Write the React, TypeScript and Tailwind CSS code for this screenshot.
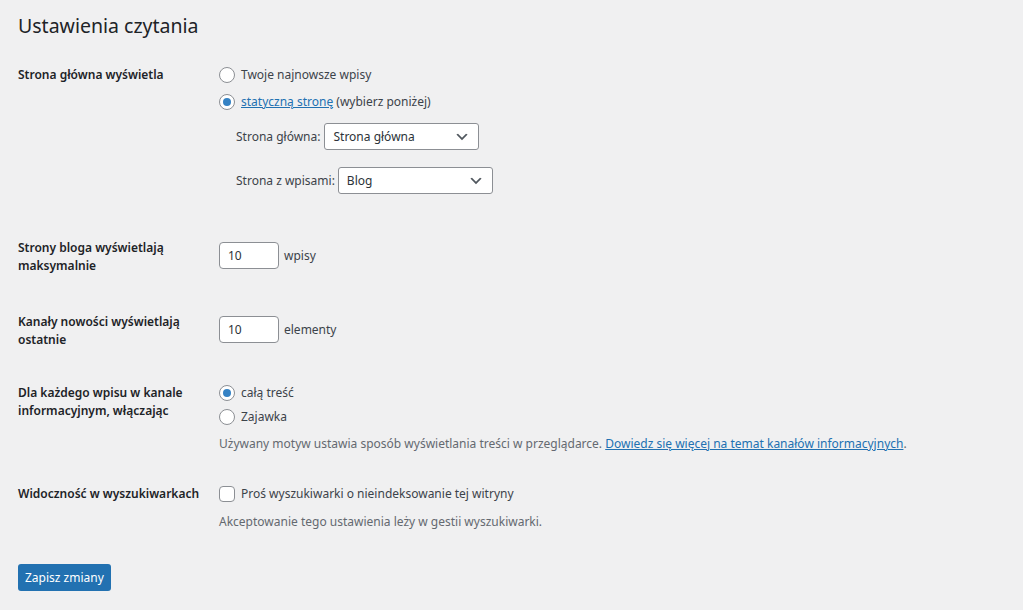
import React from 'react';

const font = { fontFamily: '"Noto Sans", "Open Sans", Arial, sans-serif' };

function Radio({ checked }: { checked?: boolean }) {
  return (
    <span className="flex h-4 w-4 shrink-0 items-center justify-center rounded-full border border-[#8c8f94] bg-white">
      {checked && <span className="h-2 w-2 rounded-full bg-[#3582c4]" />}
    </span>
  );
}

function Chevron() {
  return (
    <svg viewBox="0 0 20 20" className="h-4 w-4" fill="#50575e">
      <path d="M5 6l5 5 5-5 2 1-7 7-7-7 2-1z" />
    </svg>
  );
}

function Select({ value, width }: { value: string; width: string }) {
  return (
    <div className={`flex h-[27px] items-center justify-between rounded-[3px] border border-[#8c8f94] bg-white pl-2 pr-2 text-[12px] text-[#2c3338] ${width}`}>
      <span>{value}</span>
      <Chevron />
    </div>
  );
}

function NumberInput({ value }: { value: string }) {
  return (
    <div className="flex h-[27px] w-[60px] items-center rounded-[4px] border border-[#8c8f94] bg-white px-2 text-[12px] text-[#2c3338]">
      {value}
    </div>
  );
}

function Label({ children }: { children: React.ReactNode }) {
  return (
    <div className="w-[201px] shrink-0 pr-2 text-[12px] font-semibold leading-[18px] text-[#1d2327]">
      {children}
    </div>
  );
}

export default function App() {
  return (
    <div className="min-h-screen bg-[#f0f0f1] pl-[18px] pt-[11px] text-[12px] text-[#3c434a]" style={font}>
      <h1 className="text-[19.5px] font-normal leading-[29px] text-[#1d2327]">Ustawienia czytania</h1>

      <div className="mt-[26px]">
        {/* Strona główna */}
        <div className="flex h-[173px]">
          <Label>Strona główna wyświetla</Label>
          <div className="flex flex-col">
            <div className="flex h-[18px] items-center gap-[6px]">
              <Radio />
              <span>Twoje najnowsze wpisy</span>
            </div>
            <div className="mt-[9px] flex h-[18px] items-center gap-[6px]">
              <Radio checked />
              <span>
                <span className="text-[#2271b1] underline">statyczną stronę</span> (wybierz poniżej)
              </span>
            </div>
            <div className="mt-[12px] flex items-center gap-[4px] pl-[17px]">
              <span>Strona główna:</span>
              <Select value="Strona główna" width="w-[155px]" />
            </div>
            <div className="mt-[17px] flex items-center gap-[3px] pl-[17px]">
              <span>Strona z wpisami:</span>
              <Select value="Blog" width="w-[155px]" />
            </div>
          </div>
        </div>

        {/* Strony bloga */}
        <div className="flex h-[74px]">
          <Label>
            Strony bloga wyświetlają
            <br />
            maksymalnie
          </Label>
          <div className="mt-[3px] flex items-start gap-[5px]">
            <NumberInput value="10" />
            <span className="leading-[27px]">wpisy</span>
          </div>
        </div>

        {/* Kanały */}
        <div className="flex h-[71px]">
          <Label>
            Kanały nowości wyświetlają
            <br />
            ostatnie
          </Label>
          <div className="mt-[3px] flex items-start gap-[5px]">
            <NumberInput value="10" />
            <span className="leading-[27px]">elementy</span>
          </div>
        </div>

        {/* Dla każdego wpisu */}
        <div className="flex h-[101px]">
          <Label>
            Dla każdego wpisu w kanale
            <br />
            informacyjnym, włączając
          </Label>
          <div className="flex flex-col">
            <div className="flex h-[18px] items-center gap-[6px]">
              <Radio checked />
              <span>całą treść</span>
            </div>
            <div className="mt-[6px] flex h-[18px] items-center gap-[6px]">
              <Radio />
              <span>Zajawka</span>
            </div>
            <p className="mt-[9px] leading-[18px] text-[#646970]">
              Używany motyw ustawia sposób wyświetlania treści w przeglądarce.{' '}
              <span className="text-[#2271b1] underline">Dowiedz się więcej na temat kanałów informacyjnych</span>.
            </p>
          </div>
        </div>

        {/* Widoczność */}
        <div className="flex h-[79px]">
          <Label>Widoczność w wyszukiwarkach</Label>
          <div className="flex flex-col">
            <div className="flex h-[18px] items-center gap-[6px]">
              <span className="h-4 w-4 shrink-0 rounded-[4px] border border-[#8c8f94] bg-white" />
              <span>Proś wyszukiwarki o nieindeksowanie tej witryny</span>
            </div>
            <p className="mt-[10px] leading-[18px] text-[#646970]">
              Akceptowanie tego ustawienia leży w gestii wyszukiwarki.
            </p>
          </div>
        </div>

        <button className="h-[27px] rounded-[3px] bg-[#2271b1] px-[7px] text-[12px] text-white">
          Zapisz zmiany
        </button>
      </div>
    </div>
  );
}
